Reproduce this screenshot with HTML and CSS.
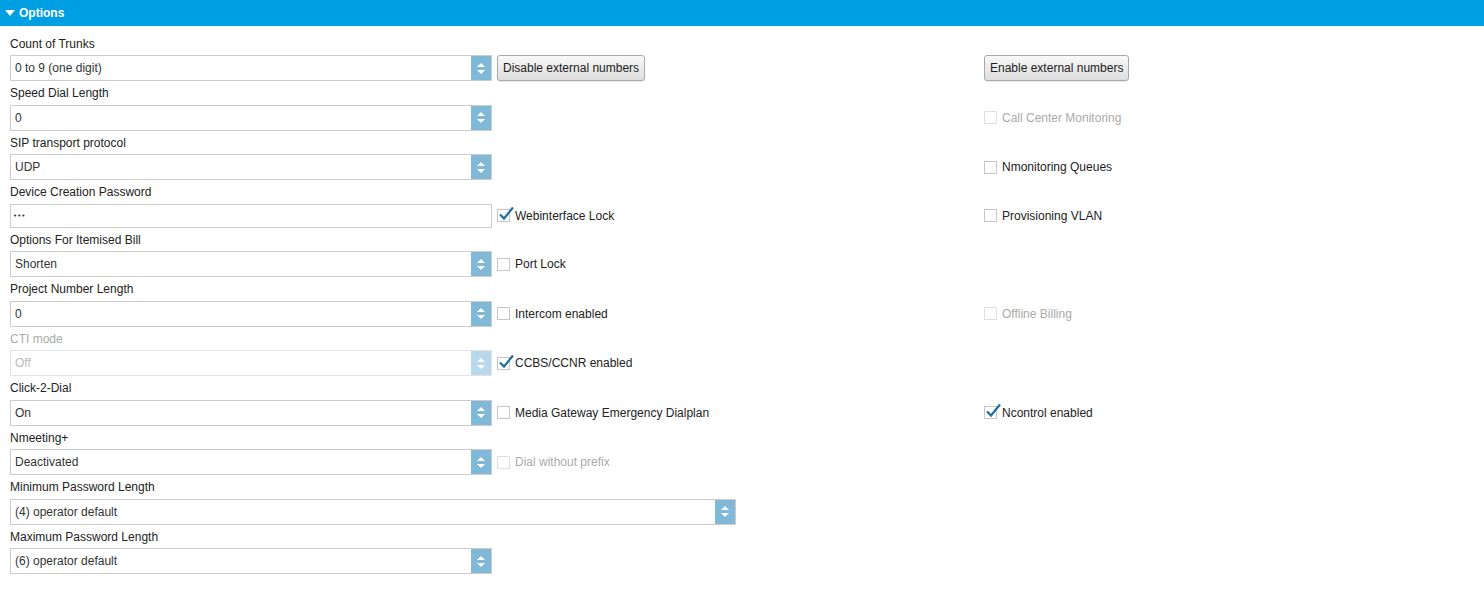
FILE: index.html
```html
<!DOCTYPE html>
<html>
<head>
    <title>Options</title>
    <link rel="stylesheet" href="styles.css">
</head>
<body>
    <div class="panel-header">
        <span class="caret"></span>
        <span class="panel-title">Options</span>
    </div>

    <div class="panel-body">
        <!-- Count of Trunks -->
        <div class="row">
            <div class="label">Count of Trunks</div>
            <div class="select">
                <span class="value">0 to 9 (one digit)</span>
                <span class="spin"><i class="up"></i><i class="down"></i></span>
            </div>
            <div class="cell"><button class="btn">Disable external numbers</button></div>
            <div class="cell"><button class="btn">Enable external numbers</button></div>
        </div>

        <!-- Speed Dial Length -->
        <div class="row">
            <div class="label">Speed Dial Length</div>
            <div class="select">
                <span class="value">0</span>
                <span class="spin"><i class="up"></i><i class="down"></i></span>
            </div>
            <div class="cell"></div>
            <div class="cell">
                <label class="check disabled"><span class="box"></span>Call Center Monitoring</label>
            </div>
        </div>

        <!-- SIP transport protocol -->
        <div class="row">
            <div class="label">SIP transport protocol</div>
            <div class="select">
                <span class="value">UDP</span>
                <span class="spin"><i class="up"></i><i class="down"></i></span>
            </div>
            <div class="cell"></div>
            <div class="cell">
                <label class="check"><span class="box"></span>Nmonitoring Queues</label>
            </div>
        </div>

        <!-- Device Creation Password -->
        <div class="row">
            <div class="label">Device Creation Password</div>
            <div class="input"><span class="dots">&bull;&bull;&bull;</span></div>
            <div class="cell">
                <label class="check checked"><span class="box"><svg viewBox="0 0 16 16"><path d="M2 8.5 L6 12.5 L15 1.5"/></svg></span>Webinterface Lock</label>
            </div>
            <div class="cell">
                <label class="check"><span class="box"></span>Provisioning VLAN</label>
            </div>
        </div>

        <!-- Options For Itemised Bill -->
        <div class="row">
            <div class="label">Options For Itemised Bill</div>
            <div class="select">
                <span class="value">Shorten</span>
                <span class="spin"><i class="up"></i><i class="down"></i></span>
            </div>
            <div class="cell">
                <label class="check"><span class="box"></span>Port Lock</label>
            </div>
            <div class="cell"></div>
        </div>

        <!-- Project Number Length -->
        <div class="row">
            <div class="label">Project Number Length</div>
            <div class="select">
                <span class="value">0</span>
                <span class="spin"><i class="up"></i><i class="down"></i></span>
            </div>
            <div class="cell">
                <label class="check"><span class="box"></span>Intercom enabled</label>
            </div>
            <div class="cell">
                <label class="check disabled"><span class="box"></span>Offline Billing</label>
            </div>
        </div>

        <!-- CTI mode -->
        <div class="row">
            <div class="label disabled">CTI mode</div>
            <div class="select disabled">
                <span class="value">Off</span>
                <span class="spin"><i class="up"></i><i class="down"></i></span>
            </div>
            <div class="cell">
                <label class="check checked"><span class="box"><svg viewBox="0 0 16 16"><path d="M2 8.5 L6 12.5 L15 1.5"/></svg></span>CCBS/CCNR enabled</label>
            </div>
            <div class="cell"></div>
        </div>

        <!-- Click-2-Dial -->
        <div class="row">
            <div class="label">Click-2-Dial</div>
            <div class="select">
                <span class="value">On</span>
                <span class="spin"><i class="up"></i><i class="down"></i></span>
            </div>
            <div class="cell">
                <label class="check"><span class="box"></span>Media Gateway Emergency Dialplan</label>
            </div>
            <div class="cell">
                <label class="check checked"><span class="box"><svg viewBox="0 0 16 16"><path d="M2 8.5 L6 12.5 L15 1.5"/></svg></span>Ncontrol enabled</label>
            </div>
        </div>

        <!-- Nmeeting+ -->
        <div class="row">
            <div class="label">Nmeeting+</div>
            <div class="select">
                <span class="value">Deactivated</span>
                <span class="spin"><i class="up"></i><i class="down"></i></span>
            </div>
            <div class="cell">
                <label class="check disabled"><span class="box"></span>Dial without prefix</label>
            </div>
            <div class="cell"></div>
        </div>

        <!-- Minimum Password Length -->
        <div class="row">
            <div class="label">Minimum Password Length</div>
            <div class="select select-wide">
                <span class="value">(4) operator default</span>
                <span class="spin"><i class="up"></i><i class="down"></i></span>
            </div>
        </div>

        <!-- Maximum Password Length -->
        <div class="row">
            <div class="label">Maximum Password Length</div>
            <div class="select">
                <span class="value">(6) operator default</span>
                <span class="spin"><i class="up"></i><i class="down"></i></span>
            </div>
            <div class="cell"></div>
            <div class="cell"></div>
        </div>
    </div>
</body>
</html>
```

FILE: styles.css
```css
/* Base */
body {
    margin: 0;
    font-family: "Liberation Sans", Arial, sans-serif;
    font-size: 12px;
    color: #222;
    background: #fff;
}

/* Panel header */
.panel-header {
    height: 26px;
    background: #009fe3;
    color: #fff;
    display: flex;
    align-items: center;
    padding-left: 5px;
}

.caret {
    width: 0;
    height: 0;
    border-left: 5px solid transparent;
    border-right: 5px solid transparent;
    border-top: 6px solid #fff;
    margin-right: 4px;
}

.panel-title {
    font-weight: bold;
    font-size: 12px;
}

/* Panel body */
.panel-body {
    padding: 5.5px 10px 10px;
}

.row {
    display: grid;
    grid-template-columns: 482px 482px 1fr;
    column-gap: 5px;
    padding-top: 5px;
}

.label {
    grid-column: 1 / -1;
    line-height: 14px;
    margin-bottom: 4.5px;
}

.label.disabled {
    color: #aaa;
}

.cell {
    display: flex;
    align-items: center;
}

/* Select box */
.select {
    grid-column: 1;
    height: 26px;
    box-sizing: border-box;
    border: 1px solid #ccc;
    display: flex;
    align-items: stretch;
    color: #333;
}

.select .value {
    flex: 1;
    display: flex;
    align-items: center;
    padding-left: 4px;
}

.spin {
    width: 20px;
    background: #7fb9d7;
    display: flex;
    flex-direction: column;
    align-items: center;
    justify-content: center;
    gap: 3px;
}

.spin .up {
    width: 0;
    height: 0;
    border-left: 4px solid transparent;
    border-right: 4px solid transparent;
    border-bottom: 4px solid #fff;
}

.spin .down {
    width: 0;
    height: 0;
    border-left: 4px solid transparent;
    border-right: 4px solid transparent;
    border-top: 4px solid #fff;
}

.select.disabled {
    border-color: #e2e2e2;
    color: #bbb;
}

.select.disabled .spin {
    background: #b7d9eb;
}

.select-wide {
    grid-column: 1 / 3;
    width: 726px;
}

/* Text input */
.input {
    grid-column: 1;
    height: 24px;
    box-sizing: border-box;
    border: 1px solid #ccc;
    display: flex;
    align-items: center;
    padding-left: 2px;
    color: #333;
}

.dots {
    font-family: "DejaVu Sans", sans-serif;
    font-size: 7px;
    letter-spacing: 0;
}

/* Buttons */
.btn {
    height: 26px;
    padding: 0 5px;
    font-family: "Liberation Sans", Arial, sans-serif;
    font-size: 12px;
    color: #222;
    background: linear-gradient(#f8f8f8, #dedede);
    border: 1px solid #a9a9a9;
    border-radius: 3px;
    box-shadow: 0 1px 1px rgba(0, 0, 0, 0.08);
}

/* Checkboxes */
.check {
    display: flex;
    align-items: center;
    color: #222;
}

.check .box {
    position: relative;
    width: 13px;
    height: 13px;
    box-sizing: border-box;
    border: 1px solid #c6c6c6;
    background: #fff;
    margin-right: 5px;
}

.check .box svg {
    position: absolute;
    left: 0;
    top: -4px;
    width: 16px;
    height: 16px;
    fill: none;
    stroke: #1f6f9f;
    stroke-width: 2.2;
}

.check.disabled {
    color: #aaa;
}

.check.disabled .box {
    border-color: #e0e0e0;
}
```
